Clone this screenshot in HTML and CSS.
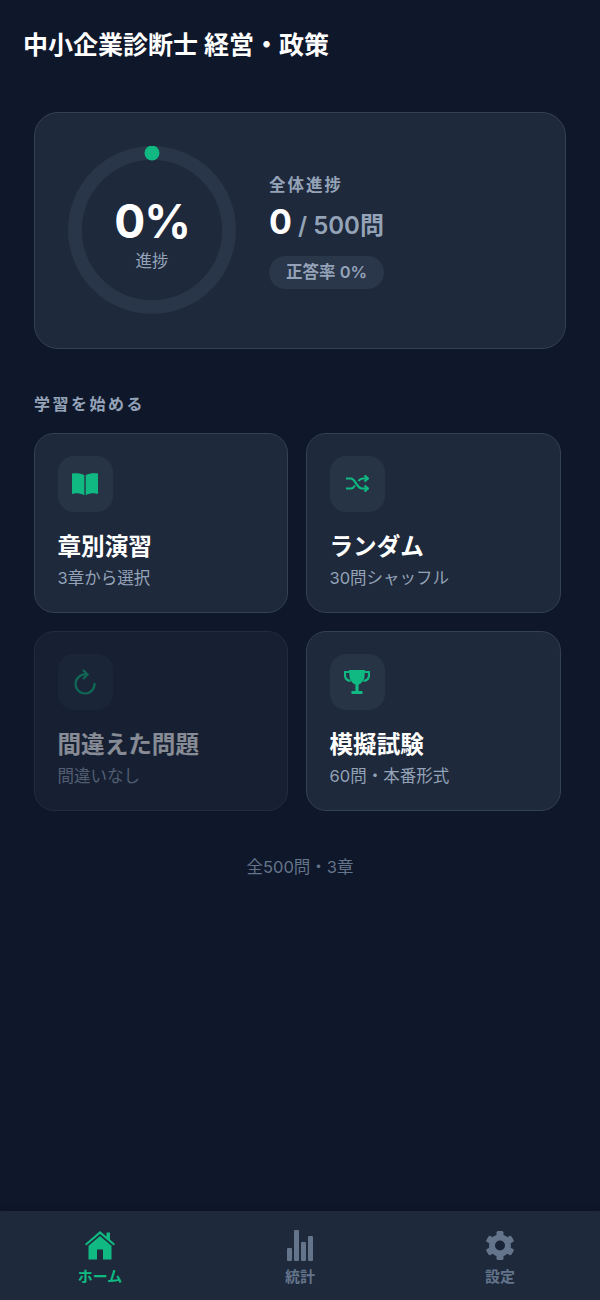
FILE: index.html
```html
<!DOCTYPE html>
<html lang="ja">
<head>
<meta charset="utf-8">
<title>中小企業診断士 経営・政策</title>
<link rel="stylesheet" href="styles.css">
</head>
<body>
<div class="app">
  <header class="header"><h1>中小企業診断士 経営・政策</h1></header>
  <main class="main">
    <section class="hero">
      <div class="ring">
        <svg class="ring-svg" viewBox="0 0 168 168" width="168" height="168">
          <circle class="ring-track" cx="84" cy="84" r="77"></circle>
          <circle class="ring-dot" cx="84" cy="7" r="7.5"></circle>
        </svg>
        <div class="ring-text">
          <div class="ring-pct">0%</div>
          <div class="ring-label">進捗</div>
        </div>
      </div>
      <div class="stats">
        <div class="stats-label">全体進捗</div>
        <div class="stats-count"><span class="stats-num">0</span><span class="stats-total"> / 500問</span></div>
        <div class="pill">正答率 0%</div>
      </div>
    </section>
    <h2 class="section-title">学習を始める</h2>
    <div class="grid">
      <div class="card">
        <div class="icon-box">
          <svg viewBox="0 0 28 24" width="28" height="24"><path class="fill" d="M1 1.6C5 .8 9.500 1.200 13.300 3.200V23.200C9.500 21.300 5 20.900 1 21.900Z"/><path class="fill" d="M27 1.600C23 .8 18.500 1.200 14.700 3.200V23.200C18.500 21.300 23 20.900 27 21.900Z"/></svg>
        </div>
        <div class="card-title">章別演習</div>
        <div class="card-sub">3章から選択</div>
      </div>
      <div class="card">
        <div class="icon-box">
          <svg viewBox="0 0 23 17" width="23" height="17" class="line"><path d="M0 3.500H5C9 3.500 11 13.500 16 13.500H22"/><path d="M0 13.500H5C6.800 13.500 8 12 9 10.500M12.500 6C13.500 4.500 15 3.500 17 3.500H22"/><path d="M18.500 .5L22 3.500L18.500 6.500"/><path d="M18.500 10.500L22 13.500L18.500 16.500"/></svg>
        </div>
        <div class="card-title">ランダム</div>
        <div class="card-sub">30問シャッフル</div>
      </div>
      <div class="card card-off">
        <div class="icon-box">
          <svg viewBox="0 0 24 26" width="24" height="26" class="line"><path d="M13.500 5.600A9.500 9.500 0 1 0 21.500 14"/><path d="M10 1L14.500 5.600L10 10"/></svg>
        </div>
        <div class="card-title">間違えた問題</div>
        <div class="card-sub">間違いなし</div>
      </div>
      <div class="card">
        <div class="icon-box">
          <svg viewBox="0 0 26 24" width="26" height="24"><path class="line" d="M5.500 2H1V5C1 8 3 10.500 6.500 11"/><path class="line" d="M20.500 2H25V5C25 8 23 10.500 19.500 11"/><path class="fill" d="M5 0H21L20.500 7C20 11 16.500 14 14.600 14.600V21H18.500V24H7.500V21H11.400V14.600C9.500 14 6 11 5.500 7Z"/></svg>
        </div>
        <div class="card-title">模擬試験</div>
        <div class="card-sub">60問・本番形式</div>
      </div>
    </div>
    <p class="foot">全500問・3章</p>
  </main>
  <nav class="nav">
    <div class="nav-item active">
      <svg viewBox="0 0 30 29" width="30" height="29"><path class="fill" d="M15 0L21.500 5.500V1.500H25V8.500L30 13L28.700 14.500L15 3L1.300 14.500L0 13Z"/><path class="fill" fill-rule="evenodd" d="M15 5L26.500 14.800V28.500H3.500V14.800ZM12 18.500V28.500H18V18.500Z"/></svg>
      <span>ホーム</span>
    </div>
    <div class="nav-item">
      <svg viewBox="0 0 26 31" width="26" height="31"><rect class="fill" x="0" y="18" width="5" height="13" rx="1"/><rect class="fill" x="7" y="0" width="5" height="31" rx="1"/><rect class="fill" x="14" y="12" width="5" height="19" rx="1"/><rect class="fill" x="21" y="6" width="5" height="25" rx="1"/></svg>
      <span>統計</span>
    </div>
    <div class="nav-item">
      <svg viewBox="0 0 30 30" width="30" height="30"><circle class="fill" cx="15" cy="15" r="11"/><rect class="fill" x="11.500" y=".5" width="7" height="29" rx="1.500"/><rect class="fill tooth-a" x="11.500" y=".5" width="7" height="29" rx="1.500"/><rect class="fill tooth-b" x="11.500" y=".5" width="7" height="29" rx="1.500"/><circle class="hole" cx="15" cy="15" r="5"/></svg>
      <span>設定</span>
    </div>
  </nav>
</div>
</body>
</html>
```
FILE: styles.css
```css
* { box-sizing: border-box; margin: 0; padding: 0; }
html, body { height: 100%; }
body {
  background: #0f172a;
  color: #fff;
  font-family: Inter, "Noto Sans CJK JP", sans-serif;
}
.app { width: 600px; height: 1300px; display: flex; flex-direction: column; }
.header { height: 92px; padding: 28px 24px 0; }
.header h1 { font-size: 25px; line-height: 35px; font-weight: 700; margin-left: -1px; }
.main { flex: 1; padding: 20px 34px 0; }
.hero {
  height: 237px;
  display: flex;
  align-items: center;
  gap: 33px;
  padding-left: 33px;
  background: #1e293b;
  border: 1px solid #334155;
  border-radius: 24px;
}
.ring { position: relative; width: 168px; height: 168px; flex: none; margin-top: -1px; }
.ring-svg { display: block; }
.ring-track { fill: none; stroke: #293548; stroke-width: 14; }
.ring-dot { fill: #10b981; }
.ring-text {
  position: absolute;
  inset: 0;
  padding-top: 4px;
  display: flex;
  flex-direction: column;
  align-items: center;
  justify-content: center;
  gap: 1px;
}
.ring-pct { font-size: 46px; line-height: 56px; font-weight: 700; letter-spacing: -1px; }
.ring-label { font-size: 16.5px; line-height: 22px; color: #94a3b8; }
.stats { display: flex; flex-direction: column; align-items: flex-start; }
.stats-label { font-size: 16.5px; line-height: 24px; font-weight: 600; color: #94a3b8; letter-spacing: 2px; }
.stats-count { margin-top: 1px; line-height: 48px; height: 48px; }
.stats-num { font-size: 34px; font-weight: 700; }
.stats-total { font-size: 24px; font-weight: 600; color: #94a3b8; }
.pill {
  margin-top: 10px;
  padding: 0 17px;
  height: 33px;
  line-height: 33px;
  border-radius: 17px;
  background: #2a3649;
  font-size: 16.5px;
  font-weight: 600;
  color: #94a3b8;
}
.section-title {
  margin-top: 43px;
  font-size: 16px;
  line-height: 24px;
  font-weight: 600;
  color: #94a3b8;
  letter-spacing: 2.5px;
}
.grid {
  margin-top: 17px;
  width: 527px;
  display: grid;
  grid-template-columns: 254px 255px;
  gap: 18px;
}
.card {
  height: 180px;
  padding: 21.5px 22.5px;
  background: #1e293b;
  border: 1px solid #334155;
  border-radius: 20px;
}
.card-off { opacity: 0.5; }
.icon-box {
  width: 55px;
  height: 56px;
  border-radius: 16px;
  background: #273446;
  display: flex;
  align-items: center;
  justify-content: center;
}
.fill { fill: #10b981; }
.line { fill: none; stroke: #10b981; stroke-width: 2.2; }
.card-title { margin-top: 16px; font-size: 23.6px; line-height: 38px; font-weight: 700; }
.card-sub { font-size: 16.5px; line-height: 24px; color: #94a3b8; }
.foot { margin-top: 44px; text-align: center; font-size: 16.5px; line-height: 24px; color: #64748b; }
.nav {
  height: 89px;
  display: flex;
  background: #1e293b;
  padding-top: 19px;
  box-shadow: 0 -2px 6px rgba(0, 0, 0, 0.15);
}
.nav-item {
  flex: 1;
  display: flex;
  flex-direction: column;
  align-items: center;
  font-size: 15px;
  font-weight: 600;
  line-height: 22px;
  color: #64748b;
}
.nav-item svg { display: block; height: 31px; }
.nav-item span { margin-top: 5px; }
.nav-item .fill { fill: #64748b; }
.nav-item.active { color: #10b981; }
.nav-item.active .fill { fill: #10b981; }
.tooth-a { transform: rotate(60deg); transform-origin: 15px 15px; }
.tooth-b { transform: rotate(120deg); transform-origin: 15px 15px; }
.hole { fill: #1a2438; }
```
